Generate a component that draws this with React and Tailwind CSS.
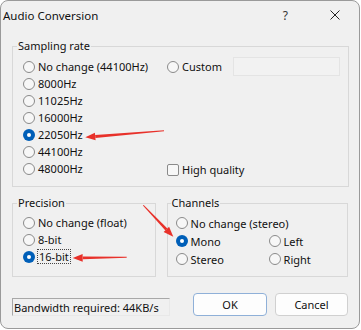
import React from "react";

const Radio = ({ checked }) =>
  checked ? (
    <span className="w-[12px] h-[12px] rounded-full bg-[#005fb8] flex items-center justify-center shrink-0">
      <span className="w-[4px] h-[4px] rounded-full bg-white" />
    </span>
  ) : (
    <span className="w-[12px] h-[12px] rounded-full border border-[#8a8a8a] bg-[#f7f7f7] shrink-0" />
  );

const Option = ({ label, checked, focus, h = "h-[17px]" }) => (
  <div className={`flex items-center ${h}`}>
    <Radio checked={checked} />
    {focus ? (
      <span className="ml-[2px] px-[1px] leading-[13px] border border-dotted border-[#444]">{label}</span>
    ) : (
      <span className="ml-[3px]">{label}</span>
    )}
  </div>
);

const Group = ({ title, className, children }) => (
  <fieldset className={`border border-[#d8d8d8] ${className}`}>
    <legend className="px-[1px] leading-[16px]">{title}</legend>
    {children}
  </fieldset>
);

// arrow drawn as a tapering shaft plus a triangular head
const Arrow = ({ x1, y1, x2, y2 }) => {
  const dx = x2 - x1;
  const dy = y2 - y1;
  const len = Math.hypot(dx, dy);
  const ux = dx / len;
  const uy = dy / len;
  const nx = -uy;
  const ny = ux;
  const bx = x2 - ux * 10;
  const by = y2 - uy * 10;
  const p = (x, y) => `${x.toFixed(1)},${y.toFixed(1)}`;
  const shaft = [
    p(x1 + nx * 0.5, y1 + ny * 0.5),
    p(bx + nx * 1.4, by + ny * 1.4),
    p(bx - nx * 1.4, by - ny * 1.4),
    p(x1 - nx * 0.5, y1 - ny * 0.5),
  ].join(" ");
  const head = [p(x2, y2), p(bx + nx * 3.8, by + ny * 3.8), p(bx - nx * 3.8, by - ny * 3.8)].join(" ");
  return (
    <g fill="#e8312a">
      <polygon points={shaft} />
      <polygon points={head} />
    </g>
  );
};

export default function App() {
  return (
    <div className="w-[361px] h-[330px] bg-white relative font-['Noto_Sans',sans-serif] text-[11px] leading-[17px] text-[#111]">
      <div className="w-[360px] h-[329px] border border-[#9a9a9a] rounded-[8px] bg-[#f0f0f0] overflow-hidden flex flex-col">
        {/* title bar */}
        <div className="h-[28px] flex items-center pl-[2px] pr-[19px] shrink-0">
          <span className="text-[11.5px]">Audio Conversion</span>
          <span className="ml-auto text-[12px] text-[#333]">?</span>
          <svg className="ml-[42px]" width="10" height="10" viewBox="0 0 10 10">
            <path d="M0.5 0.5 L9.5 9.5 M9.5 0.5 L0.5 9.5" stroke="#222" strokeWidth="1" />
          </svg>
        </div>

        <div className="px-[11px] pt-[9px] flex flex-col">
          <Group title="Sampling rate" className="w-[337px] pl-[4px] pt-[4px] pb-[9px]">
            <div className="flex pl-[6px]">
              <div className="w-[144px] flex flex-col">
                <Option label="No change (44100Hz)" />
                <Option label="8000Hz" />
                <Option label="11025Hz" />
                <Option label="16000Hz" />
                <Option label="22050Hz" checked />
                <Option label="44100Hz" />
                <Option label="48000Hz" />
              </div>
              <div className="flex flex-col flex-1">
                <div className="flex items-center h-[17px]">
                  <div className="w-[66px] flex items-center">
                    <Radio />
                    <span className="ml-[3px]">Custom</span>
                  </div>
                  <div className="w-[107px] h-[19px] border border-[#e4e4e4] bg-[#f2f2f2]" />
                </div>
                <div className="mt-auto flex items-center h-[19px] -mb-[2px]">
                  <span className="w-[12px] h-[12px] rounded-[2px] border border-[#8a8a8a] bg-[#f7f7f7]" />
                  <span className="ml-[3px]">High quality</span>
                </div>
              </div>
            </div>
          </Group>

          <div className="flex mt-[8px]">
            <Group title="Precision" className="w-[144px] pl-[4px] pt-[3px] pb-[11px]">
              <div className="pl-[6px] flex flex-col">
                <Option label="No change (float)" />
                <Option label="8-bit" />
                <Option label="16-bit" checked focus />
              </div>
            </Group>
            <Group title="Channels" className="ml-[11px] w-[182px] pl-[3px] pt-[3px] pb-[8px]">
              <div className="pl-[5px] grid grid-cols-[93px_1fr]">
                <div className="col-span-2">
                  <Option label="No change (stereo)" h="h-[18px]" />
                </div>
                <Option label="Mono" checked h="h-[18px]" />
                <Option label="Left" h="h-[18px]" />
                <Option label="Stereo" h="h-[18px]" />
                <Option label="Right" h="h-[18px]" />
              </div>
            </Group>
          </div>

          <div className="flex items-end mt-[16px]">
            <div className="w-[158px] h-[18px] border border-[#a8a8a8] border-b-[#e8e8e8] border-r-[#e8e8e8] flex items-center pl-[1px]">
              Bandwidth required: 44KB/s
            </div>
            <button className="ml-[23px] w-[74px] h-[23px] rounded-[4px] border border-[#8fb0d8] bg-[#fdfdfd] text-[11px]">
              OK
            </button>
            <button className="ml-[8px] w-[73px] h-[23px] rounded-[4px] border border-[#d0d0d0] bg-[#fdfdfd] text-[11px]">
              Cancel
            </button>
          </div>
        </div>
      </div>

      <svg className="absolute left-0 top-0 pointer-events-none" width="361" height="330">
        <Arrow x1={164} y1={130.7} x2={85.3} y2={137.3} />
        <Arrow x1={126.7} y1={257.3} x2={72.7} y2={258} />
        <Arrow x1={143.3} y1={205.3} x2={173.3} y2={236.7} />
      </svg>
    </div>
  );
}
